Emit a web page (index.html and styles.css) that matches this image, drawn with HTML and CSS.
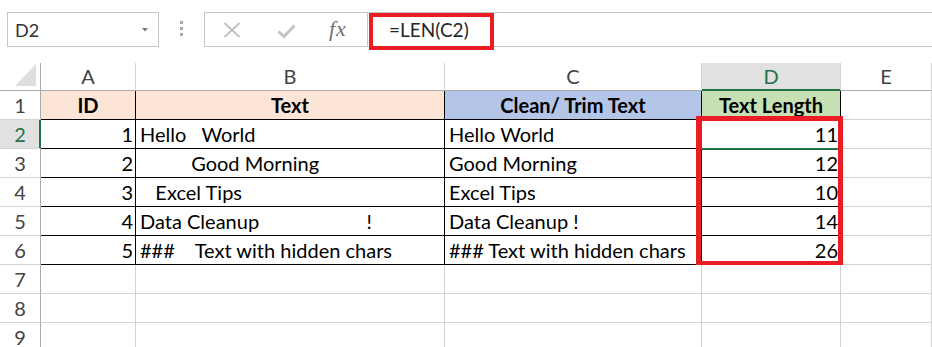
FILE: index.html
```html
<!DOCTYPE html>
<html lang="en">
<head>
<meta charset="utf-8">
<title>LEN formula</title>
<link rel="stylesheet" href="styles.css">
</head>
<body>
<div class="app">
  <div class="toolbar">
    <div class="namebox">
      <span class="cellref">D2</span>
      <svg class="caret" width="6" height="4" viewBox="0 0 6 4"><path d="M0 0H6L3 3.5Z" fill="#7a7a7a"/></svg>
    </div>
    <div class="grip"><i></i><i></i><i></i></div>
    <div class="fbar">
      <div class="fbtns">
        <svg class="ico-x" width="18" height="16" viewBox="0 0 18 16"><path d="M1.5 1L16.5 15M16.5 1L1.5 15" stroke="#c3c3c3" stroke-width="2" fill="none"/></svg>
        <svg class="ico-ok" width="19" height="14" viewBox="0 0 19 14"><path d="M1.5 7.5L7 12.5L17.5 1.5" stroke="#c3c3c3" stroke-width="3" fill="none"/></svg>
        <span class="fx">fx</span>
      </div>
      <div class="formula">=LEN(C2)</div>
      <div class="mark mark-formula"></div>
    </div>
  </div>

  <div class="sheet">
    <table class="grid">
      <colgroup>
        <col class="c-hdr"><col class="c-a"><col class="c-b"><col class="c-c"><col class="c-d"><col class="c-e">
      </colgroup>
      <thead>
        <tr class="colhead">
          <th class="corner"><svg width="21" height="22" viewBox="0 0 21 22"><path d="M21 0V22H0Z" fill="#dfdfdf"/></svg></th>
          <th>A</th><th>B</th><th>C</th><th class="sel">D</th><th>E</th>
        </tr>
      </thead>
      <tbody>
        <tr class="t">
          <th class="rn">1</th>
          <td class="h peach">ID</td>
          <td class="h peach">Text</td>
          <td class="h blue">Clean/ Trim Text</td>
          <td class="h green">Text Length</td>
          <td></td>
        </tr>
        <tr class="t">
          <th class="rn sel">2</th>
          <td class="num">1</td>
          <td>Hello   World</td>
          <td>Hello World</td>
          <td class="num">11</td>
          <td></td>
        </tr>
        <tr class="t">
          <th class="rn">3</th>
          <td class="num">2</td>
          <td>          Good Morning</td>
          <td>Good Morning</td>
          <td class="num">12</td>
          <td></td>
        </tr>
        <tr class="t">
          <th class="rn">4</th>
          <td class="num">3</td>
          <td>   Excel Tips</td>
          <td>Excel Tips</td>
          <td class="num">10</td>
          <td></td>
        </tr>
        <tr class="t">
          <th class="rn">5</th>
          <td class="num">4</td>
          <td>Data Cleanup                     !</td>
          <td>Data Cleanup !</td>
          <td class="num">14</td>
          <td></td>
        </tr>
        <tr class="t">
          <th class="rn">6</th>
          <td class="num">5</td>
          <td>###    Text with hidden chars</td>
          <td>### Text with hidden chars</td>
          <td class="num">26</td>
          <td></td>
        </tr>
        <tr>
          <th class="rn">7</th><td></td><td></td><td></td><td></td><td></td>
        </tr>
        <tr>
          <th class="rn">8</th><td></td><td></td><td></td><td></td><td></td>
        </tr>
        <tr>
          <th class="rn">9</th><td></td><td></td><td></td><td></td><td></td>
        </tr>
      </tbody>
    </table>
    <div class="active-cell"></div>
    <div class="mark mark-range"></div>
  </div>
</div>
</body>
</html>
```

FILE: styles.css
```css
html, body {
  margin: 0;
  padding: 0;
  background: #fff;
  overflow: hidden;
}

.app {
  width: 932px;
  height: 347px;
  overflow: hidden;
  font-family: Lato, "Liberation Sans", sans-serif;
  color: #000;
}

/* ---------- formula toolbar ---------- */
.toolbar {
  height: 63px;
  box-sizing: border-box;
  padding: 12px 0 0 7px;
  display: flex;
  align-items: flex-start;
}

.namebox {
  width: 152px;
  height: 35px;
  box-sizing: border-box;
  border: 1px solid #c6c6c6;
  display: flex;
  align-items: center;
  justify-content: space-between;
  padding: 0 10px 0 7px;
  font-size: 18px;
  color: #333;
}

.caret {
  display: block;
  margin-top: 1px;
}

.grip {
  width: 45px;
  padding-top: 9px;
  display: flex;
  flex-direction: column;
  align-items: center;
  gap: 3px;
}

.grip i {
  display: block;
  width: 3px;
  height: 3px;
  background: #a8a8a8;
}

.fbar {
  flex: 1;
  height: 35px;
  box-sizing: border-box;
  border: 1px solid #c6c6c6;
  border-right: none;
  display: flex;
  position: relative;
}

.fbtns {
  flex: none;
  width: 163px;
  box-sizing: border-box;
  border-right: 1px solid #c6c6c6;
  display: flex;
  align-items: center;
  padding-left: 18px;
}

.ico-x { display: block; margin-top: 1px; }
.ico-ok { display: block; margin-left: 36px; margin-top: 2px; }

.fx {
  margin-left: 33px;
  font-family: "Liberation Serif", serif;
  font-style: italic;
  font-size: 22px;
  color: #707070;
  letter-spacing: 1px;
  margin-top: -1px;
}

.formula {
  padding-left: 21px;
  font-size: 19px;
  line-height: 33px;
  color: #262626;
}

.mark {
  position: absolute;
  box-sizing: border-box;
  border: 4px solid #ec1c24;
  pointer-events: none;
}

.mark-formula {
  left: 164px;
  top: 0;
  width: 125px;
  height: 37px;
}

/* ---------- sheet grid ---------- */
.sheet {
  position: relative;
}

.grid {
  border-collapse: separate;
  border-spacing: 0;
  table-layout: fixed;
  width: 932px;
}

.c-hdr { width: 41px; }
.c-a { width: 95px; }
.c-b { width: 309px; }
.c-c { width: 257px; }
.c-d { width: 139px; }
.c-e { width: 91px; }

.grid th,
.grid td {
  padding: 0 3px 0 4px;
  border-right: 1px solid #d4d4d4;
  border-bottom: 1px solid #d4d4d4;
  white-space: pre;
  overflow: visible;
  text-align: left;
  font-size: 20px;
}

.grid td {
  height: 28px;
  line-height: 28px;
  vertical-align: bottom;
}

/* column letters */
.colhead th {
  height: 27px;
  line-height: 27px;
  padding: 0;
  text-align: center;
  font-weight: 400;
  color: #444;
  border-bottom-color: #ababab;
  vertical-align: middle;
}

.colhead th.corner {
  height: 23px;
  border-right-color: #ababab;
  text-align: right;
  padding: 0 4px 4px 0;
  vertical-align: bottom;
  line-height: 0;
}

.colhead th.sel {
  background: #e1e1e1;
  color: #217346;
  border-bottom-color: #217346;
  box-shadow: inset 0 -1px 0 #217346;
}

/* row numbers */
.grid th.rn {
  height: 28px;
  line-height: 28px;
  padding: 0;
  text-align: center;
  font-weight: 400;
  color: #444;
  border-right-color: #ababab;
  border-bottom-color: #d4d4d4;
}

.grid th.rn.sel {
  background: #e1e1e1;
  color: #217346;
  border-right-color: #217346;
  box-shadow: inset -1px 0 0 #217346;
}

/* bordered data range A1:D6 */
.t td:nth-child(-n+5) {
  border-right-color: #000;
  border-bottom-color: #000;
}

.grid td.num {
  text-align: right;
  padding-right: 2px;
}

.grid td.h {
  font-weight: 700;
  text-align: center;
  padding: 0;
}

.peach { background: #fce4d6; }
.blue { background: #b4c6e7; }
.green { background: #c6e0b4; }

/* selection and highlight overlays */
.active-cell {
  position: absolute;
  left: 700px;
  top: 55px;
  width: 142px;
  height: 32px;
  box-sizing: border-box;
  border: 2px solid #217346;
}

.mark-range {
  left: 696px;
  top: 53px;
  width: 147px;
  height: 149px;
  border-width: 5px 5px 4px 5px;
}
```
